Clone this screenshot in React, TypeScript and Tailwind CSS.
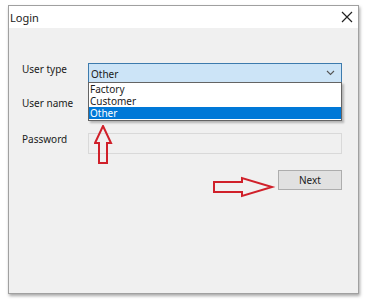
import { useState } from 'react';

const options = ['Factory', 'Customer', 'Other'];

function UpArrow() {
  return (
    <svg width="20" height="40" viewBox="0 0 20 40" className="absolute left-[85px] top-[97px]">
      <path
        d="M9 1 L17 18 L13 18 L13 38 L5 38 L5 18 L1 18 Z"
        fill="none"
        stroke="#d0202a"
        strokeWidth="2"
        strokeLinejoin="miter"
      />
    </svg>
  );
}

function RightArrow() {
  return (
    <svg width="64" height="22" viewBox="0 0 64 22" className="absolute left-[203px] top-[148px]">
      <path
        d="M2 6 L30 6 L30 2 L60 11 L30 20 L30 16 L2 16 Z"
        fill="none"
        stroke="#d0202a"
        strokeWidth="2"
      />
    </svg>
  );
}

export default function App() {
  const [userType] = useState('Other');

  return (
    <div
      className="w-[366px] h-[302px] bg-white pt-[5px] pl-[8px] text-[10px] text-[#1a1a1a]"
      style={{ fontFamily: '"Noto Sans", "Open Sans", sans-serif' }}
    >
      <div className="w-[351px] h-[289px] border border-[#a0a0a0] flex flex-col shadow-[1px_2px_3px_rgba(0,0,0,0.35)]">
        <div className="h-[22px] bg-white flex items-center justify-between pl-[1px] pr-[5px]">
          <span className="leading-none text-[11px]">Login</span>
          <svg width="12" height="12" viewBox="0 0 12 12">
            <path d="M1 1 L11 11 M11 1 L1 11" stroke="#222" strokeWidth="1.2" />
          </svg>
        </div>

        <div className="relative flex-1 bg-[#f0f0f0] pl-[13px] pr-[15px] pt-[35px]">
          <div className="flex items-start">
            <span className="w-[66px] leading-none pt-[1px]">User type</span>
            <div className="relative w-[254px]">
              <div className="h-[20px] bg-[#cce4f7] border border-[#3d7bad] flex items-center justify-between pl-[2px] pr-[6px]">
                <span className="leading-none pt-[2px]">{userType}</span>
                <svg width="9" height="6" viewBox="0 0 9 6">
                  <path d="M1 1 L4.5 4.5 L8 1" fill="none" stroke="#555" strokeWidth="1.1" />
                </svg>
              </div>
              <ul className="absolute left-0 top-[19px] w-full bg-white border border-[#646464] z-10 shadow-[2px_2px_2px_rgba(0,0,0,0.25)] pb-[1px]">
                {options.map((o) => (
                  <li
                    key={o}
                    className={
                      o === userType
                        ? 'h-[12px] leading-[12px] pl-[1px] bg-[#0078d7] text-white'
                        : 'h-[12px] leading-[12px] pl-[1px]'
                    }
                  >
                    {o}
                  </li>
                ))}
              </ul>
            </div>
          </div>

          <div className="flex items-start mt-[14px]">
            <span className="w-[66px] leading-none pt-[1px]">User name</span>
            <div className="w-[254px] h-[20px] bg-white border border-[#7a7a7a]" />
          </div>

          <div className="flex items-start mt-[16px]">
            <span className="w-[66px] leading-none pt-[1px]">Password</span>
            <div className="w-[254px] h-[21px] bg-[#f0f0f0] border border-[#d9d9d9]" />
          </div>

          <div className="flex justify-end mt-[16px] w-[320px]">
            <button className="w-[64px] h-[20px] bg-[#e1e1e1] border border-[#adadad] leading-none">
              Next
            </button>
          </div>

          <UpArrow />
          <RightArrow />
        </div>
      </div>
    </div>
  );
}
